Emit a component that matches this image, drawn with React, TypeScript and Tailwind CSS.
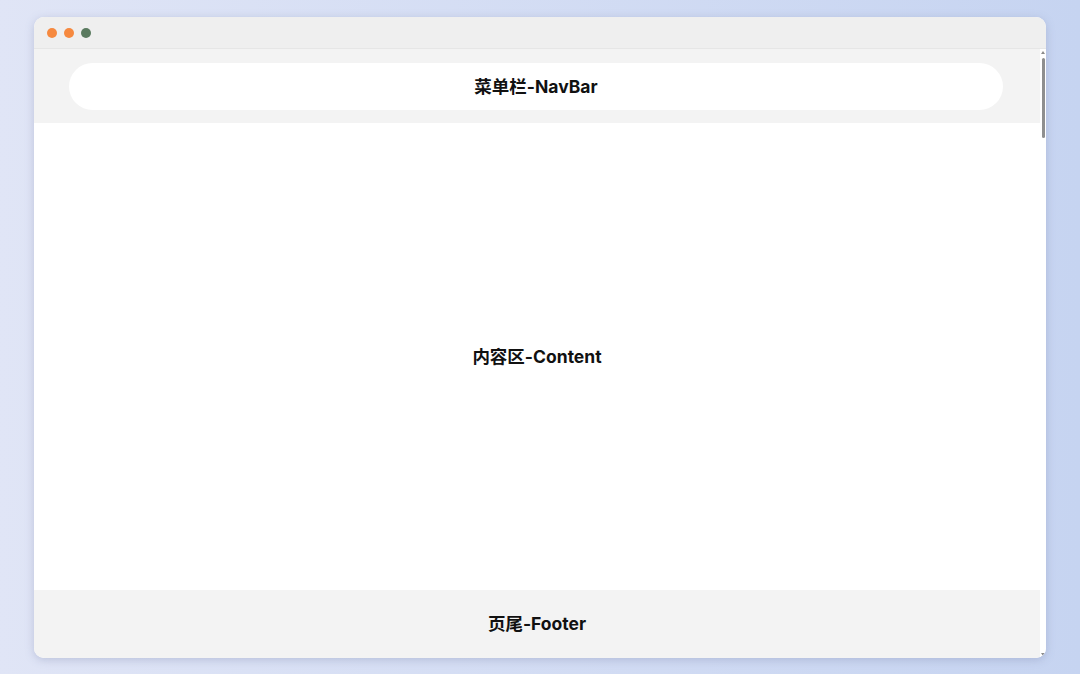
import React from "react";

const font = { fontFamily: '"Inter", "Noto Sans CJK SC", sans-serif' };

function TrafficLights() {
  return (
    <div className="flex items-center gap-[7px] pl-[13px]">
      <span className="h-[10px] w-[10px] rounded-full bg-[#f6893f]" />
      <span className="h-[10px] w-[10px] rounded-full bg-[#f6893f]" />
      <span className="h-[10px] w-[10px] rounded-full bg-[#5a7a5f]" />
    </div>
  );
}

function ScrollTrack() {
  return (
    <div className="flex w-[6px] flex-col items-center bg-white pt-[2px] pb-[2px]">
      <div className="h-0 w-0 border-x-[2px] border-b-[3px] border-x-transparent border-b-[#8a8a8a]" />
      <div className="mt-[4px] h-[80px] w-[3px] rounded-full bg-[#8f8f8f]" />
      <div className="flex-1" />
      <div className="h-0 w-0 border-x-[2px] border-t-[3px] border-x-transparent border-t-[#8a8a8a]" />
    </div>
  );
}

export default function App() {
  return (
    <div
      className="flex h-[674px] w-[1080px] bg-gradient-to-r from-[#e0e5f6] to-[#c6d4f1] pt-[17px] pl-[34px]"
      style={font}
    >
      <div className="flex h-[641px] w-[1012px] flex-col overflow-hidden rounded-[10px] bg-white shadow-[0_2px_8px_rgba(120,130,170,0.35)]">
        <div className="flex h-[32px] items-center border-b border-[#e6e6e6] bg-[#efefef]">
          <TrafficLights />
        </div>
        <div className="flex flex-1">
          <div className="flex flex-1 flex-col">
            <div className="flex h-[74px] items-center bg-[#f3f3f3] pl-[35px] pr-[37px]">
              <div className="flex h-[47px] flex-1 items-center justify-center rounded-full bg-white pt-[2px] text-[17.5px] font-bold text-[#111]">
                菜单栏-NavBar
              </div>
            </div>
            <div className="flex flex-1 items-center justify-center bg-white pt-[2px] text-[17.5px] font-bold text-[#111]">
              内容区-Content
            </div>
            <div className="flex h-[68px] items-center justify-center bg-[#f3f3f3] text-[17.5px] font-bold text-[#111]">
              页尾-Footer
            </div>
          </div>
          <ScrollTrack />
        </div>
      </div>
    </div>
  );
}
